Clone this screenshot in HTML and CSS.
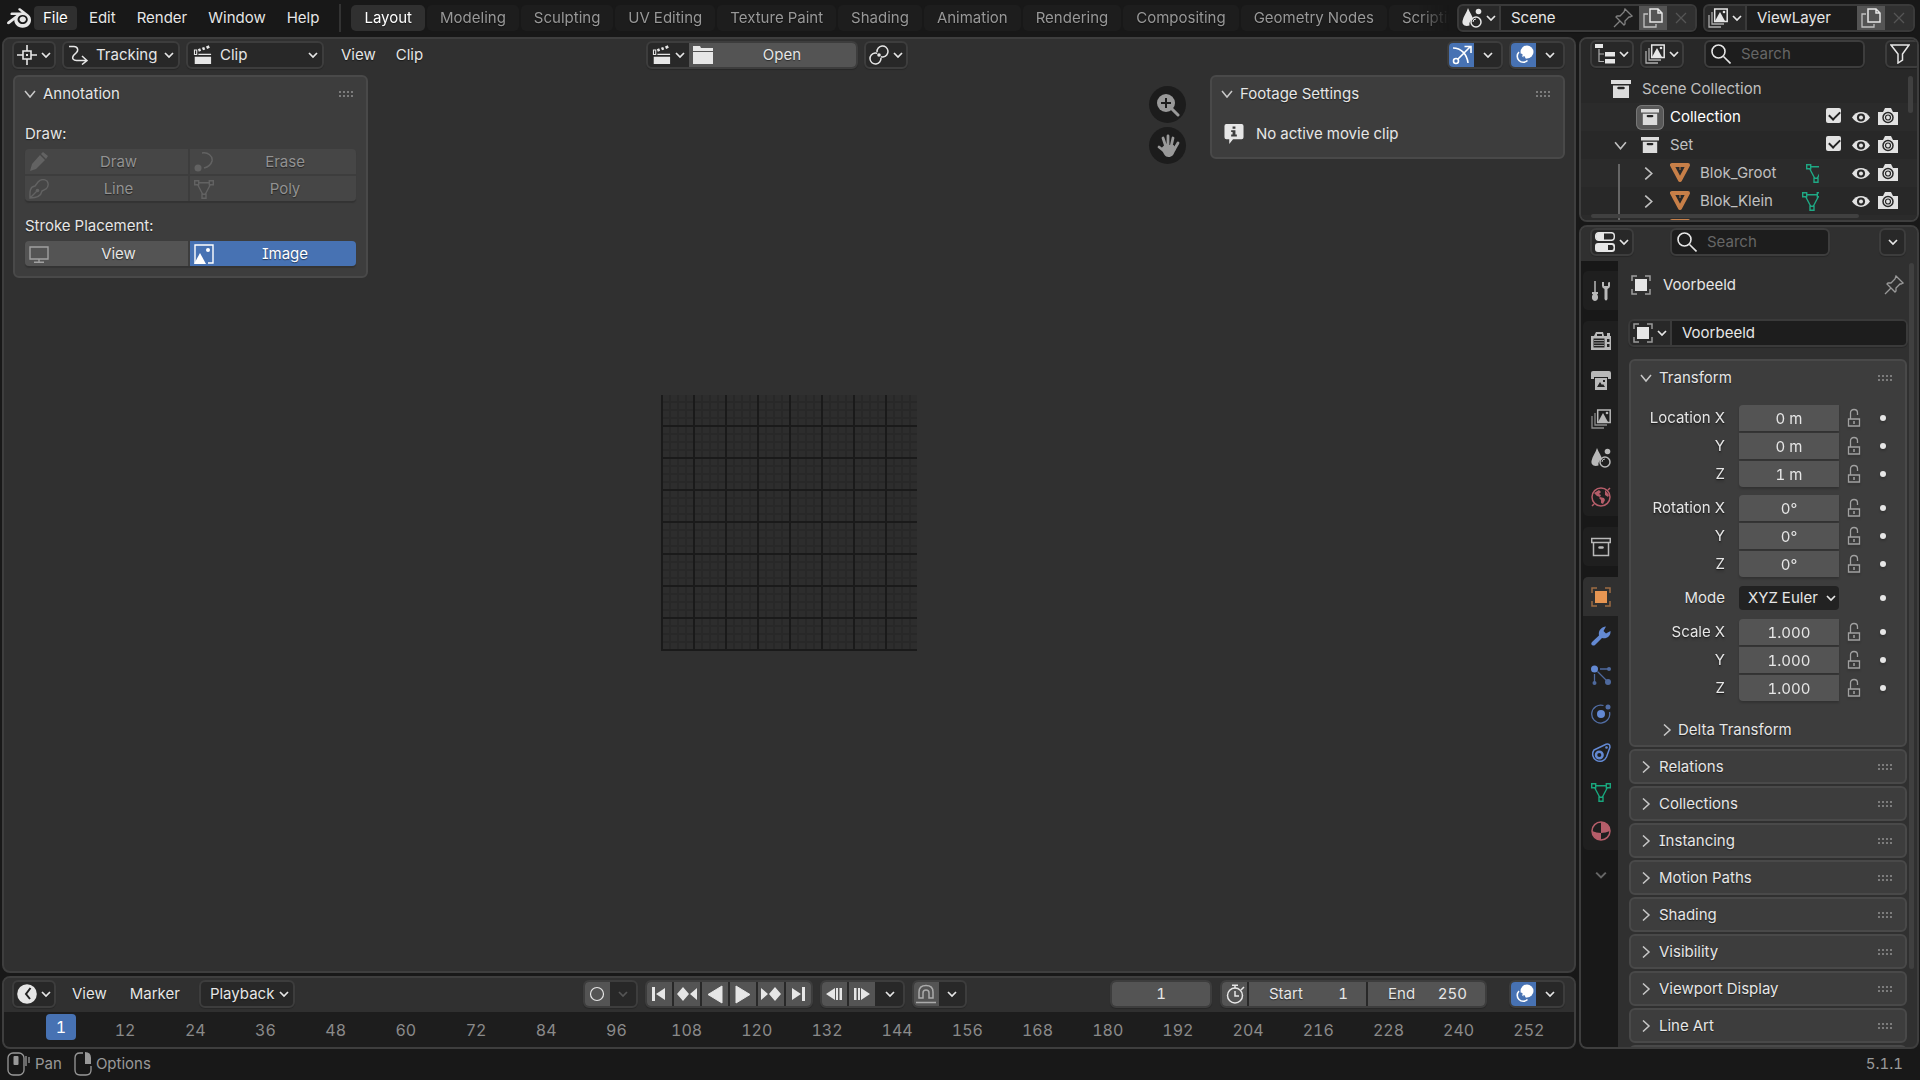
FILE: index.html
```html
<!DOCTYPE html>
<html lang="en">
<head>
<meta charset="utf-8">
<title>Blender</title>
<link rel="stylesheet" href="styles.css">
</head>
<body>
<svg class="defs" aria-hidden="true">
  <symbol id="blender" viewBox="0 0 24 24"><path fill="currentColor" d="M12.51 13.214c.046-.8.438-1.506 1.03-2.006a3.424 3.424 0 0 1 2.212-.79c.85 0 1.631.3 2.211.79.592.5.983 1.206 1.028 2.005.045.823-.285 1.586-.865 2.153a3.389 3.389 0 0 1-2.374.938 3.393 3.393 0 0 1-2.376-.938c-.58-.567-.91-1.33-.865-2.152M7.35 14.831c.006.314.106.922.256 1.398a7.372 7.372 0 0 0 1.593 2.757 8.227 8.227 0 0 0 2.787 2.001 8.947 8.947 0 0 0 3.66.76 8.964 8.964 0 0 0 3.657-.772 8.285 8.285 0 0 0 2.785-2.01 7.428 7.428 0 0 0 1.592-2.762 6.964 6.964 0 0 0 .25-3.074 7.123 7.123 0 0 0-1.016-2.779 7.764 7.764 0 0 0-1.852-2.043h.002L13.566 2.55l-.02-.015c-.492-.378-1.319-.376-1.86.002-.547.382-.609 1.015-.123 1.415l-.001.001 3.126 2.543-9.53.01h-.013c-.788.001-1.545.518-1.695 1.172-.154.665.38 1.217 1.2 1.22V8.9l4.83-.01-8.62 6.617-.034.025c-.813.622-1.075 1.658-.563 2.313.52.667 1.625.668 2.447.004L7.414 14s-.069.52-.063.831zm12.09 1.741c-.97.988-2.326 1.548-3.795 1.55-1.47.004-2.827-.552-3.797-1.538a4.51 4.51 0 0 1-1.036-1.622 4.282 4.282 0 0 1 .282-3.519 4.702 4.702 0 0 1 1.153-1.371c.942-.768 2.141-1.183 3.396-1.185 1.256-.002 2.455.41 3.398 1.175.48.391.87.854 1.152 1.367a4.28 4.28 0 0 1 .522 1.706 4.236 4.236 0 0 1-.239 1.811 4.54 4.54 0 0 1-1.035 1.626"/></symbol>
  <symbol id="down" viewBox="0 0 10 10"><path d="M1 3l4 4 4-4" fill="none" stroke="currentColor" stroke-width="1.7"/></symbol>
  <symbol id="open" viewBox="0 0 12 12"><path d="M1 3l5 6 5-6" fill="none" stroke="currentColor" stroke-width="1.5"/></symbol>
  <symbol id="closed" viewBox="0 0 12 12"><path d="M3 0.500l6 5.500-6 5.500" fill="none" stroke="currentColor" stroke-width="1.5"/></symbol>
  <symbol id="grip" viewBox="0 0 16 8"><path d="M1 1h2v2H1zM5 1h2v2H5zM9 1h2v2H9zM13 1h2v2h-2zM1 5h2v2H1zM5 5h2v2H5zM9 5h2v2H9zM13 5h2v2h-2z" fill="#7c7c7c"/></symbol>
  <symbol id="tracker" viewBox="0 0 20 20"><path d="M10 0v6M10 14v6M0 10h6M14 10h6M6 6h8v8H6z" fill="none" stroke="currentColor" stroke-width="1.6"/><path d="M9 9h2v2H9z" fill="currentColor"/></symbol>
  <symbol id="path" viewBox="0 0 20 20"><path d="M1 1.500h5c4 0 4.500 4 2.500 6l-3 3c-2 3 0 5 3 5h10M14 11l5 4.500-5 4" fill="none" stroke="currentColor" stroke-width="1.500"/></symbol>
  <symbol id="clap" viewBox="0 0 20 22"><path d="M2 13h18v8H2z" fill="currentColor"/><path d="M1.700 5.500h2.500v5H1.700z" fill="none" stroke="currentColor" stroke-width="1.200"/><path d="M6 10.300h14" stroke="currentColor" stroke-width="1.300"/><path d="M6 6l2.500-1M10.500 4.500l2.500-1M15 3l3-1.300" stroke="currentColor" stroke-width="3"/></symbol>
  <symbol id="folder" viewBox="0 0 20 20"><path d="M0 1h7l1 2h12v3H0zM0 7h20v12H0z" fill="currentColor"/></symbol>
  <symbol id="link" viewBox="0 0 20 20"><g fill="none" stroke="currentColor" stroke-width="1.500"><circle cx="6.500" cy="13.500" r="5.500" stroke-dasharray="27.500 7" transform="rotate(-5 6.500 13.500)"/><circle cx="13.500" cy="6.500" r="5.500" stroke-dasharray="27.500 7" transform="rotate(175 13.500 6.500)"/></g><circle cx="10" cy="10" r="1.800" fill="currentColor"/></symbol>
  <symbol id="gizmo" viewBox="0 0 20 20"><g fill="none" stroke="currentColor" stroke-width="1.600"><path d="M1 3c8 0 14 6 15 15M6 14L18 2M12.500 1.500H19V8"/><circle cx="4" cy="16" r="2.500"/></g></symbol>
  <symbol id="overlay" viewBox="0 0 20 20"><circle cx="13" cy="7" r="6.500" fill="currentColor"/><path d="M5 7a6 6 0 1 0 8.500 8.500M10 10l3 3" fill="none" stroke="currentColor" stroke-width="1.600"/><path d="M7 9l4 4" stroke="#4772b3" stroke-width="1.500" stroke-dasharray="2 1.500"/></symbol>
  <symbol id="pencil" viewBox="0 0 20 20"><path d="M1 19l2-7 8-9 5 5-9 9zM12 2l2-2 5 4-2 3z" fill="currentColor"/></symbol>
  <symbol id="erase" viewBox="0 0 20 20"><circle cx="4" cy="16" r="3.500" fill="currentColor"/><path d="M8 1c6-1 11 3 10 8-1 4-4 6-8 7" fill="none" stroke="currentColor" stroke-width="1.500"/></symbol>
  <symbol id="pen" viewBox="0 0 20 20"><path d="M1 19c0-5-1-11 5-12l3-4c3-3 6-3 9-1 2 3 1 6-1 8l-4 2c-1 5-6 7-12 7zM1 19l7-7" fill="none" stroke="currentColor" stroke-width="1.400"/><circle cx="8.500" cy="11.500" r="1.800" fill="currentColor"/></symbol>
  <symbol id="mesh" viewBox="0 0 20 20"><path d="M.7 1.700h4v4h-4zM15.300 1.700h4v4h-4zM8 15.300h4v4H8zM4.700 3.700h10.600M3.700 5.700l5 9.600M16.300 5.700l-5 9.600" fill="none" stroke="currentColor" stroke-width="1.400"/></symbol>
  <symbol id="screen" viewBox="0 0 20 20"><path d="M1 3h18v12H1zM10 15v3M5 18.300h10" fill="none" stroke="currentColor" stroke-width="1.400"/></symbol>
  <symbol id="image" viewBox="0 0 20 20"><path d="M4 19H1V1h18v18h-5" fill="none" stroke="currentColor" stroke-width="1.400"/><path d="M0 20l6-11 6 11z" fill="currentColor"/><circle cx="14" cy="6" r="2" fill="currentColor"/></symbol>
  <symbol id="magnify" viewBox="0 0 24 24"><circle cx="10" cy="10" r="9" fill="#999"/><path d="M15 15l7 7" stroke="#999" stroke-width="3" stroke-linecap="round"/><path d="M10 5v10M5 10h10" stroke="#1c1c1c" stroke-width="2"/></symbol>
  <symbol id="hand" viewBox="0 0 24 24"><path d="M3 13l5 4M7 4l3 9M12 2v10M17 4l-2 9M22 9l-4 7" stroke="#999" stroke-width="2.800" stroke-linecap="round"/><path d="M5.500 14l3-3h9l2.500 3c-2 7-4 9-7.500 9-3.500 0-5-3-7-9z" fill="#999"/></symbol>
  <symbol id="info" viewBox="0 0 20 21"><path d="M2 0h16q2 0 2 2v12q0 2-2 2H9l-4 5v-5H2q-2 0-2-2V2q0-2 2-2z" fill="currentColor"/><path d="M8.500 2.500h3v2.500h-3zM7 6.500h4.500V11H13v2H7v-2h1.500V8.500H7z" fill="#3d3d3d"/></symbol>
  <symbol id="scene" viewBox="0 0 20 20"><path d="M6 0c2 5 4.500 8 5 11-3 1-4 4-3.500 6.500C2 19 0 16 .5 13 1.500 8 4.500 5 6 0z" fill="currentColor"/><circle cx="16.500" cy="3.500" r="2.800" fill="currentColor"/><circle cx="14" cy="14" r="5" fill="none" stroke="currentColor" stroke-width="1.500"/><path d="M11 14a3 3 0 0 1 3-3" fill="none" stroke="currentColor"/></symbol>
  <symbol id="pin" viewBox="0 0 20 20"><path d="M12 1l7 7-2 1-1 0-4 4v3l-1 1-8-8 1-1h3l4-4zM7 13l-6 6" fill="none" stroke="currentColor" stroke-width="1.300"/></symbol>
  <symbol id="copy" viewBox="0 0 20 20"><path d="M7 1h8l4 4v9H7zM15 1v4h4" fill="none" stroke="currentColor" stroke-width="1.500"/><path d="M5 6H1v13h12v-3" fill="none" stroke="currentColor" stroke-width="1.300" opacity=".75"/></symbol>
  <symbol id="cross" viewBox="0 0 12 12"><path d="M1 1l10 10M11 1L1 11" stroke="currentColor" stroke-width="1.300"/></symbol>
  <symbol id="layers" viewBox="0 0 20 20"><path d="M6.700 1h12.500v12.500H6.700z" fill="none" stroke="currentColor" stroke-width="1.500"/><path d="M7 13l5-9 5 9z" fill="currentColor"/><circle cx="16" cy="4" r="1.300" fill="currentColor"/><path d="M4 4v12h12M1 7v12h12" fill="none" stroke="currentColor" stroke-width="1.300" opacity=".7"/></symbol>
  <symbol id="tree" viewBox="0 0 20 20"><path d="M0 0h8v4H0zM10 8h10v4.500H10zM10 15h10v4.500H10z" fill="currentColor"/><path d="M4 5v12.500h5M4 10h5" fill="none" stroke="currentColor" stroke-width="1.200" opacity=".7"/></symbol>
  <symbol id="search" viewBox="0 0 20 20"><circle cx="7.500" cy="7.500" r="6.500" fill="none" stroke="currentColor" stroke-width="1.600"/><path d="M12.500 12.500l7 7" stroke="currentColor" stroke-width="1.600"/></symbol>
  <symbol id="funnel" viewBox="0 0 20 20"><path d="M1 1h18l-6.500 9v6L8 19v-9z" fill="none" stroke="currentColor" stroke-width="1.500"/></symbol>
  <symbol id="box" viewBox="0 0 20 20"><path d="M0 1h20v4H0zM2 6.500h16V19H2z" fill="currentColor"/><path d="M7.500 9h5" stroke="#222" stroke-width="2.500" stroke-linecap="round"/></symbol>
  <symbol id="boxline" viewBox="0 0 20 20"><path d="M.7 1.500h18.600v4H.7zM2.500 5.500v13h15v-13" fill="none" stroke="currentColor" stroke-width="1.500"/><path d="M8.500 10.500h3" stroke="currentColor" stroke-width="2.500" stroke-linecap="round"/></symbol>
  <symbol id="eye" viewBox="0 0 20 14"><path d="M0 7c5-8 15-8 20 0-5 8-15 8-20 0z" fill="currentColor"/><circle cx="10" cy="7" r="4.500" fill="#282828"/><circle cx="10" cy="7" r="2.200" fill="currentColor"/></symbol>
  <symbol id="camera" viewBox="0 0 20 18"><path d="M0 4h5l2-4h6l2 4h5v13H0z" fill="currentColor"/><circle cx="10" cy="9.500" r="5" fill="none" stroke="#282828" stroke-width="1.500"/><circle cx="10" cy="9.500" r="2.500" fill="none" stroke="#282828" stroke-width="1.200"/></symbol>
  <symbol id="tri" viewBox="0 0 20 20"><path d="M2 2h16l-8 15z" fill="none" stroke="#c77f48" stroke-width="4" stroke-linejoin="round"/><path d="M10 2v5" stroke="#c77f48"/></symbol>
  <symbol id="toggles" viewBox="0 0 20 20"><rect x=".7" y=".7" width="18.600" height="7.600" rx="3" fill="none" stroke="currentColor" stroke-width="1.400"/><path d="M3 1h6v7H3Q1 8 1 4.500T3 1z" fill="currentColor"/><rect y="11" width="20" height="9" rx="3" fill="currentColor"/><path d="M13 13h4q1.500 0 1.500 2.500T17 18h-4z" fill="#282828"/></symbol>
  <symbol id="tools" viewBox="0 0 20 20"><path d="M4 0v11" stroke="currentColor" stroke-width="1.500"/><path d="M1 11h6v2H6c2 3 1 7-2 7s-4-4-2-7H1z" fill="currentColor"/><path d="M11 1v4q0 2 2.500 3v10q1.500 3 3 0V8Q19 7 19 5V1l-2 .5V5h-4V1z" fill="currentColor"/></symbol>
  <symbol id="render" viewBox="0 0 20 20"><path d="M0 5h3l2-4h7l1 4h3V2h3v3h1v14H0z" fill="currentColor"/><path d="M6 3h5v2H6zM2.500 7.500h11v9h-11zM16 8h2.500v3H16zM16 13h2.500v3H16z" fill="#222"/><path d="M3 9.500h10M3 12h10M3 14.500h10" stroke="currentColor" stroke-width=".8"/></symbol>
  <symbol id="print" viewBox="0 0 20 20"><path d="M2 1h16q2 0 2 2v6h-3V7H3v2H0V3q0-2 2-2zM4 8h12v12H4z" fill="currentColor"/><path d="M6 17l3-5 2 3 1-1 2 3zM12 10h2v2h-2z" fill="#222"/></symbol>
  <symbol id="world" viewBox="0 0 20 20"><circle cx="10" cy="10" r="9" fill="none" stroke="currentColor" stroke-width="1.500"/><path d="M3 6l5-3 2 2-2 2 2 1-1 2-3-1zM9 10l4 1 1 2-2 4-2-1v-3l-2-2zM14 3l4 5-1 2-3-2z" fill="currentColor"/><path d="M17 3l2-2M3 17l-2 2" stroke="currentColor" stroke-width="1.500"/></symbol>
  <symbol id="object" viewBox="0 0 20 20"><path d="M4 4h12v12H4z" fill="currentColor"/><path d="M1 6V1h5M14 1h5v5M19 14v5h-5M6 19H1v-5" fill="none" stroke="currentColor" stroke-width="1.500" opacity=".6"/></symbol>
  <symbol id="wrench" viewBox="0 0 20 20"><path d="M1 16L8 9.500C7 5 10 1 15 .5L12.500 5l2.500 2.500L19.500 5c.5 5-4 8.500-8.500 7L4 19q-1.500 1-3 0t0-3z" fill="currentColor"/></symbol>
  <symbol id="particles" viewBox="0 0 20 20"><circle cx="3.500" cy="4" r="3.500" fill="currentColor"/><g opacity=".7" fill="currentColor"><circle cx="18" cy="4" r="2"/><circle cx="3.500" cy="18" r="2"/><circle cx="17" cy="17" r="3"/><path d="M9 4h8M3.500 9v8M6.500 6.500L16 16" stroke="currentColor" stroke-width="1.300"/></g></symbol>
  <symbol id="physics" viewBox="0 0 20 20"><circle cx="10" cy="10" r="4" fill="currentColor"/><g opacity=".75"><circle cx="17" cy="3" r="2.500" fill="currentColor"/><path d="M12.500 1.500A9 9 0 1 0 18.500 8" fill="none" stroke="currentColor" stroke-width="1.300"/></g></symbol>
  <symbol id="constraint" viewBox="0 0 20 20"><path d="M3 7L15 1.200q4-1 4 3L15.500 14A7.200 7.200 0 1 1 3 7z" fill="none" stroke="currentColor" stroke-width="1.500"/><circle cx="8.300" cy="12" r="3.300" fill="none" stroke="currentColor" stroke-width="2.500"/><circle cx="15.500" cy="4.500" r="1.300" fill="currentColor"/></symbol>
  <symbol id="material" viewBox="0 0 20 20"><circle cx="10" cy="10" r="9" fill="none" stroke="currentColor" stroke-width="1.500"/><path d="M10 1a9 9 0 0 1 9 9q-4.500 2-9 2zM1 10q4.500 2 9 2v7a9 9 0 0 1-9-9z" fill="currentColor"/></symbol>
  <symbol id="lock" viewBox="0 0 14 20"><path d="M1.500 11h11v7h-11zM3.500 11V5q0-3.500 3.500-3.500T10.500 5v2" fill="none" stroke="currentColor" stroke-width="1.300"/><path d="M7 13v3" stroke="currentColor" stroke-width="1.500"/></symbol>
  <symbol id="clock" viewBox="0 0 20 20"><circle cx="10" cy="10" r="9.800" fill="currentColor"/><path d="M13.500 4L9 10l4 5" fill="none" stroke="#222" stroke-width="2"/></symbol>
  <symbol id="ring" viewBox="0 0 20 20"><circle cx="10" cy="10" r="6.500" fill="none" stroke="currentColor" stroke-width="1.200"/></symbol>
  <symbol id="tostart" viewBox="0 0 20 20"><path d="M3 3h3v14H3zM16 4v12l-9-6z" fill="currentColor"/></symbol>
  <symbol id="prevkey" viewBox="0 0 20 20"><path d="M6 3l6 7-6 7-6-7zM20 4v12l-7-6z" fill="currentColor"/></symbol>
  <symbol id="back" viewBox="0 0 20 20"><path d="M17 2v17L3 10.500z" fill="currentColor" stroke="currentColor" stroke-linejoin="round"/></symbol>
  <symbol id="step" viewBox="0 0 20 20"><path d="M11 4v12l-9-6zM12 4h2v12h-2zM15.500 4h2.500v12h-2.500z" fill="currentColor"/></symbol>
  <symbol id="magnet" viewBox="0 0 20 20"><path d="M3 14V8q0-6.500 7-6.500T17 8v6h-4V9q0-3-3-3T7 9v5zM0 18.500h20" fill="none" stroke="currentColor" stroke-width="1.500"/></symbol>
  <symbol id="timer" viewBox="0 0 20 20"><circle cx="10" cy="11.500" r="7.500" fill="none" stroke="currentColor" stroke-width="1.500"/><path d="M10 7v5h4M7 1.200h6M10 1v3M16 6l3-3" fill="none" stroke="currentColor" stroke-width="1.500"/></symbol>
  <symbol id="mouse" viewBox="0 0 24 24"><rect x="1" y="1" width="16" height="22" rx="5" fill="none" stroke="currentColor" stroke-width="1.300"/><rect x="6.500" y="4" width="5" height="9" rx="1" fill="currentColor"/><path d="M19 4v10M22 5v6" stroke="currentColor" stroke-width="1.300"/></symbol>
  <symbol id="mouser" viewBox="0 0 18 24"><path d="M9 1H6Q1 1 1 6v12q0 5 5 5h6q5 0 5-5v-4" fill="none" stroke="currentColor" stroke-width="1.300"/><path d="M11 0q6 0 6 6v6h-6z" fill="currentColor"/></symbol>
</svg>

<header class="topbar">
  <nav class="menus">
    <button class="logo" aria-label="Blender"><svg><use href="#blender"/></svg></button>
    <button class="menu hot">File</button><button class="menu">Edit</button><button class="menu">Render</button><button class="menu">Window</button><button class="menu">Help</button>
  </nav>
  <nav class="tabs">
    <button class="tab on">Layout</button><button class="tab">Modeling</button><button class="tab">Sculpting</button><button class="tab">UV Editing</button><button class="tab">Texture Paint</button><button class="tab">Shading</button><button class="tab">Animation</button><button class="tab">Rendering</button><button class="tab">Compositing</button><button class="tab">Geometry Nodes</button><button class="tab">Scripting</button>
  </nav>
  <div class="group idblock scene">
    <button class="drop" aria-label="Browse scene"><svg class="i"><use href="#scene"/></svg><svg class="c"><use href="#down"/></svg></button>
    <input class="name" aria-label="Scene name" value="Scene">
    <button class="flat dim" aria-label="Pin scene"><svg class="i"><use href="#pin"/></svg></button>
    <button class="solid" aria-label="New scene"><svg class="i"><use href="#copy"/></svg></button>
    <button class="gone" aria-label="Remove scene" disabled><svg class="x"><use href="#cross"/></svg></button>
  </div>
  <div class="group idblock layer">
    <button class="drop" aria-label="Browse view layer"><svg class="i"><use href="#layers"/></svg><svg class="c"><use href="#down"/></svg></button>
    <input class="name" aria-label="View layer name" value="ViewLayer">
    <button class="solid" aria-label="New view layer"><svg class="i"><use href="#copy"/></svg></button>
    <button class="gone" aria-label="Remove view layer" disabled><svg class="x"><use href="#cross"/></svg></button>
  </div>
</header>

<main class="workspace">
  <div class="column wide">
    <section class="area clip">
      <div class="bar">
        <div class="side">
          <div class="group"><button class="drop" aria-label="Editor type"><svg class="i"><use href="#tracker"/></svg><svg class="c"><use href="#down"/></svg></button></div>
          <div class="group pick tracking"><svg class="i"><use href="#path"/></svg><select aria-label="View mode"><option>Tracking</option><option>Mask</option></select><svg class="c"><use href="#down"/></svg></div>
          <div class="group pick mode"><svg class="i"><use href="#clap"/></svg><select aria-label="Clip view"><option>Clip</option><option>Graph</option><option>Dopesheet</option></select><svg class="c"><use href="#down"/></svg></div>
          <button class="menu">View</button><button class="menu">Clip</button>
        </div>
        <div class="middle">
          <div class="group opener"><button class="drop" aria-label="Browse clips"><svg class="i"><use href="#clap"/></svg><svg class="c"><use href="#down"/></svg></button><button class="solid open"><svg class="i"><use href="#folder"/></svg><span>Open</span></button></div>
          <div class="group"><button class="drop" aria-label="Pivot point"><svg class="i"><use href="#link"/></svg><svg class="c"><use href="#down"/></svg></button></div>
        </div>
        <div class="side end">
          <div class="group"><button class="blue" aria-label="Show gizmo"><svg class="i"><use href="#gizmo"/></svg></button><button class="more" aria-label="Gizmo options"><svg class="c"><use href="#down"/></svg></button></div>
          <div class="group"><button class="blue" aria-label="Show overlays"><svg class="i"><use href="#overlay"/></svg></button><button class="more" aria-label="Overlay options"><svg class="c"><use href="#down"/></svg></button></div>
        </div>
      </div>
      <div class="stage">
        <div class="mesh-grid"></div>
        <div class="panel annotation">
          <button class="title"><svg class="t"><use href="#open"/></svg><span>Annotation</span><svg class="g"><use href="#grip"/></svg></button>
          <div class="body">
            <p class="label">Draw:</p>
            <div class="choices">
              <button disabled><svg class="i"><use href="#pencil"/></svg><span>Draw</span></button>
              <button disabled><svg class="i"><use href="#erase"/></svg><span>Erase</span></button>
              <button disabled><svg class="i"><use href="#pen"/></svg><span>Line</span></button>
              <button disabled><svg class="i"><use href="#mesh"/></svg><span>Poly</span></button>
            </div>
            <p class="label">Stroke Placement:</p>
            <div class="choices">
              <button><svg class="i"><use href="#screen"/></svg><span>View</span></button>
              <button class="chosen"><svg class="i"><use href="#image"/></svg><span>Image</span></button>
            </div>
          </div>
        </div>
        <div class="navigate">
          <button aria-label="Zoom"><svg><use href="#magnify"/></svg></button>
          <button aria-label="Pan"><svg><use href="#hand"/></svg></button>
        </div>
        <div class="panel footage">
          <button class="title"><svg class="t"><use href="#open"/></svg><span>Footage Settings</span><svg class="g"><use href="#grip"/></svg></button>
          <p class="notice"><svg class="i"><use href="#info"/></svg>No active movie clip</p>
        </div>
      </div>
    </section>

    <section class="area timeline">
      <div class="bar">
        <div class="side">
          <div class="group"><button class="drop" aria-label="Editor type"><svg class="i"><use href="#clock"/></svg><svg class="c"><use href="#down"/></svg></button></div>
          <button class="menu">View</button><button class="menu">Marker</button>
          <div class="group"><button class="playback">Playback<svg class="c"><use href="#down"/></svg></button></div>
        </div>
        <div class="middle">
          <div class="group"><button class="solid" aria-label="Auto keying"><svg class="i"><use href="#ring"/></svg></button><button class="more faint" aria-label="Auto keying options" disabled><svg class="c"><use href="#down"/></svg></button></div>
          <div class="group transport">
            <button class="solid" aria-label="Jump to start"><svg class="i"><use href="#tostart"/></svg></button>
            <button class="solid" aria-label="Previous keyframe"><svg class="i"><use href="#prevkey"/></svg></button>
            <button class="solid" aria-label="Play backwards"><svg class="i"><use href="#back"/></svg></button>
            <button class="solid" aria-label="Play"><svg class="i flip"><use href="#back"/></svg></button>
            <button class="solid" aria-label="Next keyframe"><svg class="i flip"><use href="#prevkey"/></svg></button>
            <button class="solid" aria-label="Jump to end"><svg class="i flip"><use href="#tostart"/></svg></button>
          </div>
          <div class="group transport">
            <button class="solid" aria-label="Step back"><svg class="i"><use href="#step"/></svg></button>
            <button class="solid" aria-label="Step forward"><svg class="i flip"><use href="#step"/></svg></button>
            <button class="more" aria-label="Step options"><svg class="c"><use href="#down"/></svg></button>
          </div>
          <div class="group"><button class="solid" aria-label="Snap"><svg class="i soft"><use href="#magnet"/></svg></button><button class="more" aria-label="Snap options"><svg class="c"><use href="#down"/></svg></button></div>
        </div>
        <div class="side end">
          <div class="group"><input class="frame" aria-label="Current frame" value="1"></div>
          <div class="group range">
            <button class="solid" aria-label="Preview range"><svg class="i"><use href="#timer"/></svg></button>
            <label>Start<input value="1"></label>
            <label>End<input value="250"></label>
          </div>
          <div class="group last"><button class="blue" aria-label="Show overlays"><svg class="i"><use href="#overlay"/></svg></button><button class="more" aria-label="Overlay options"><svg class="c"><use href="#down"/></svg></button></div>
        </div>
      </div>
      <div class="ruler">
        <span class="playhead">1</span>
        <div class="ticks"><span>12</span><span>24</span><span>36</span><span>48</span><span>60</span><span>72</span><span>84</span><span>96</span><span>108</span><span>120</span><span>132</span><span>144</span><span>156</span><span>168</span><span>180</span><span>192</span><span>204</span><span>216</span><span>228</span><span>240</span><span>252</span></div>
      </div>
    </section>
  </div>

  <div class="column narrow">
    <section class="area outliner">
      <div class="bar">
        <div class="group"><button class="drop" aria-label="Editor type"><svg class="i"><use href="#tree"/></svg><svg class="c"><use href="#down"/></svg></button></div>
        <div class="group"><button class="drop" aria-label="Display mode"><svg class="i"><use href="#layers"/></svg><svg class="c"><use href="#down"/></svg></button></div>
        <label class="group find"><svg class="i"><use href="#search"/></svg><input type="search" placeholder="Search" aria-label="Search outliner"></label>
        <div class="group cut"><button class="filter" aria-label="Filter"><svg class="i"><use href="#funnel"/></svg></button></div>
      </div>
      <div class="tree">
        <div class="row root"><svg class="i"><use href="#box"/></svg><span>Scene Collection</span></div>
        <div class="row one alt active"><i class="fold"></i><span class="halo"><svg class="i"><use href="#box"/></svg></span><span>Collection</span><input type="checkbox" checked aria-label="Enable Collection"><button aria-label="Hide"><svg class="eye"><use href="#eye"/></svg></button><button aria-label="Disable in renders"><svg class="cam"><use href="#camera"/></svg></button></div>
        <div class="row one"><svg class="fold"><use href="#open"/></svg><span class="halo"><svg class="i"><use href="#box"/></svg></span><span>Set</span><input type="checkbox" checked aria-label="Enable Set"><button aria-label="Hide"><svg class="eye"><use href="#eye"/></svg></button><button aria-label="Disable in renders"><svg class="cam"><use href="#camera"/></svg></button></div>
        <div class="row two alt"><svg class="fold"><use href="#closed"/></svg><svg class="i"><use href="#tri"/></svg><span>Blok_Groot</span><span class="data short"><svg class="i"><use href="#mesh"/></svg></span><button aria-label="Hide"><svg class="eye"><use href="#eye"/></svg></button><button aria-label="Disable in renders"><svg class="cam"><use href="#camera"/></svg></button></div>
        <div class="row two"><svg class="fold"><use href="#closed"/></svg><svg class="i"><use href="#tri"/></svg><span>Blok_Klein</span><span class="data"><svg class="i"><use href="#mesh"/></svg></span><button aria-label="Hide"><svg class="eye"><use href="#eye"/></svg></button><button aria-label="Disable in renders"><svg class="cam"><use href="#camera"/></svg></button></div>
        <div class="row two alt"><i class="fold"></i><svg class="i"><use href="#tri"/></svg><button class="push" aria-label="Hide"><svg class="eye"><use href="#eye"/></svg></button><button aria-label="Disable in renders"><svg class="cam"><use href="#camera"/></svg></button></div>
        <div class="branch"></div><div class="vscroll"></div><div class="hscroll"></div>
      </div>
    </section>

    <section class="area properties">
      <div class="bar">
        <div class="group"><button class="drop" aria-label="Editor type"><svg class="i"><use href="#toggles"/></svg><svg class="c"><use href="#down"/></svg></button></div>
        <label class="group find"><svg class="i"><use href="#search"/></svg><input type="search" placeholder="Search" aria-label="Search properties"></label>
        <div class="group"><button class="only" aria-label="Options"><svg class="c"><use href="#down"/></svg></button></div>
      </div>
      <div class="split">
        <nav class="proptabs">
          <div class="set"><button aria-label="Tool"><svg class="i"><use href="#tools"/></svg></button></div>
          <div class="set"><button aria-label="Render"><svg class="i"><use href="#render"/></svg></button><button aria-label="Output"><svg class="i"><use href="#print"/></svg></button><button aria-label="View Layer"><svg class="i"><use href="#layers"/></svg></button><button aria-label="Scene"><svg class="i"><use href="#scene"/></svg></button><button class="red" aria-label="World"><svg class="i"><use href="#world"/></svg></button></div>
          <div class="set"><button aria-label="Collection"><svg class="i"><use href="#boxline"/></svg></button></div>
          <div class="set"><button class="orange" aria-label="Object"><svg class="i"><use href="#object"/></svg></button><button class="azure" aria-label="Modifiers"><svg class="i"><use href="#wrench"/></svg></button><button class="azure" aria-label="Particles"><svg class="i"><use href="#particles"/></svg></button><button class="azure" aria-label="Physics"><svg class="i"><use href="#physics"/></svg></button><button class="azure" aria-label="Constraints"><svg class="i"><use href="#constraint"/></svg></button><button class="green" aria-label="Data"><svg class="i"><use href="#mesh"/></svg></button><button class="red" aria-label="Material"><svg class="i"><use href="#material"/></svg></button></div>
          <svg class="t overflow"><use href="#down"/></svg>
        </nav>
        <div class="props">
          <div class="crumb"><svg class="i"><use href="#object"/></svg><span>Voorbeeld</span><button aria-label="Pin"><svg class="i"><use href="#pin"/></svg></button></div>
          <div class="group idblock object"><button class="drop" aria-label="Browse objects"><svg class="i"><use href="#object"/></svg><svg class="c"><use href="#down"/></svg></button><input class="name" aria-label="Object name" value="Voorbeeld"></div>
          <div class="panel transform">
            <button class="title"><svg class="t"><use href="#open"/></svg><span>Transform</span><svg class="g"><use href="#grip"/></svg></button>
            <div class="fields">
              <div class="triple">
                <div class="prop"><label for="lx">Location X</label><input id="lx" value="0 m"><button aria-label="Lock"><svg><use href="#lock"/></svg></button><i></i></div>
                <div class="prop"><label for="ly">Y</label><input id="ly" value="0 m"><button aria-label="Lock"><svg><use href="#lock"/></svg></button><i></i></div>
                <div class="prop"><label for="lz">Z</label><input id="lz" value="1 m"><button aria-label="Lock"><svg><use href="#lock"/></svg></button><i></i></div>
              </div>
              <div class="triple">
                <div class="prop"><label for="rx">Rotation X</label><input id="rx" value="0°"><button aria-label="Lock"><svg><use href="#lock"/></svg></button><i></i></div>
                <div class="prop"><label for="ry">Y</label><input id="ry" value="0°"><button aria-label="Lock"><svg><use href="#lock"/></svg></button><i></i></div>
                <div class="prop"><label for="rz">Z</label><input id="rz" value="0°"><button aria-label="Lock"><svg><use href="#lock"/></svg></button><i></i></div>
              </div>
              <div class="prop"><label for="mode">Mode</label><div class="euler"><select id="mode"><option>XYZ Euler</option><option>Quaternion (WXYZ)</option></select><svg class="c"><use href="#down"/></svg></div><b></b><i></i></div>
              <div class="triple">
                <div class="prop"><label for="sx">Scale X</label><input id="sx" value="1.000"><button aria-label="Lock"><svg><use href="#lock"/></svg></button><i></i></div>
                <div class="prop"><label for="sy">Y</label><input id="sy" value="1.000"><button aria-label="Lock"><svg><use href="#lock"/></svg></button><i></i></div>
                <div class="prop"><label for="sz">Z</label><input id="sz" value="1.000"><button aria-label="Lock"><svg><use href="#lock"/></svg></button><i></i></div>
              </div>
            </div>
            <button class="title sub"><svg class="t"><use href="#closed"/></svg><span>Delta Transform</span></button>
          </div>
          <div class="panel"><button class="title"><svg class="t"><use href="#closed"/></svg><span>Relations</span><svg class="g"><use href="#grip"/></svg></button></div>
          <div class="panel"><button class="title"><svg class="t"><use href="#closed"/></svg><span>Collections</span><svg class="g"><use href="#grip"/></svg></button></div>
          <div class="panel"><button class="title"><svg class="t"><use href="#closed"/></svg><span>Instancing</span><svg class="g"><use href="#grip"/></svg></button></div>
          <div class="panel"><button class="title"><svg class="t"><use href="#closed"/></svg><span>Motion Paths</span><svg class="g"><use href="#grip"/></svg></button></div>
          <div class="panel"><button class="title"><svg class="t"><use href="#closed"/></svg><span>Shading</span><svg class="g"><use href="#grip"/></svg></button></div>
          <div class="panel"><button class="title"><svg class="t"><use href="#closed"/></svg><span>Visibility</span><svg class="g"><use href="#grip"/></svg></button></div>
          <div class="panel"><button class="title"><svg class="t"><use href="#closed"/></svg><span>Viewport Display</span><svg class="g"><use href="#grip"/></svg></button></div>
          <div class="panel"><button class="title"><svg class="t"><use href="#closed"/></svg><span>Line Art</span><svg class="g"><use href="#grip"/></svg></button></div>
          <div class="panel stub"></div>
        </div>
        <div class="track"></div>
      </div>
    </section>
  </div>
</main>

<footer class="status">
  <svg class="m"><use href="#mouse"/></svg><span>Pan</span>
  <svg class="m slim"><use href="#mouser"/></svg><span>Options</span>
  <span class="version">5.1.1</span>
</footer>
</body>
</html>
```

FILE: styles.css
```css
* { box-sizing: border-box; }

body {
  margin: 0;
  height: 100vh;
  display: flex;
  flex-direction: column;
  overflow: hidden;
  background: #181818;
  color: #e6e6e6;
  font: 15px/20px Inter, "Liberation Sans", sans-serif;
  font-feature-settings: "tnum", "cv08";
}

button, input, select {
  margin: 0;
  padding: 0;
  border: 0;
  background: none;
  color: inherit;
  font: inherit;
  font-feature-settings: inherit;
  appearance: none;
  outline: 0;
  min-width: 0;
  border-radius: 0;
}
button { display: flex; align-items: center; justify-content: center; white-space: nowrap; }
button, label, .title, .label { text-shadow: 0 1px 1px rgba(0, 0, 0, .5); }
p { margin: 0; }
svg { flex: none; display: block; }
.defs { position: absolute; width: 0; height: 0; }
.i { width: 20px; height: 20px; }
.c { width: 10px; height: 10px; }
.t { width: 12px; height: 12px; color: #c8c8c8; }
.g { width: 16px; height: 8px; margin-left: auto; }
.x { width: 12px; height: 12px; }
.flip { transform: scaleX(-1); }

/* Shared header controls */
.group {
  display: flex;
  height: 28px;
  border: 2px solid #3d3d3d;
  border-radius: 6px;
  background: #282828;
  overflow: hidden;
  box-shadow: 0 1px 1px rgba(0, 0, 0, .2);
}
.drop { width: 40px; gap: 4px; }
.more { width: 27px; }
.faint { color: #555; }
.soft { color: #aaa; }
.solid { width: 24px; background: #545454; }
.blue { width: 25px; background: #4772b3; color: #fff; }
.menu { height: 24px; padding: 0 10px; border-radius: 4px; }
.menu.hot { background: #2f2f2f; color: #fff; }
.bar { display: flex; align-items: center; background: #303030; }
.find { align-items: center; gap: 10px; padding: 0 5px; background: #1d1d1d; }
.find input { width: 100%; }
.find input::placeholder { color: #666; opacity: 1; }

/* Top bar */
.topbar { display: flex; align-items: center; height: 37px; padding: 0 5px 1px 7px; flex: none; }
.menus { display: flex; gap: 3px; padding-right: 11px; border-right: 2px solid #333; height: 28px; align-items: center; }
.menus .menu { padding: 0 9px; }
.logo svg { width: 24px; height: 24px; }
.tabs {
  flex: 1;
  min-width: 0;
  display: flex;
  gap: 2px;
  padding-left: 10px;
  margin-right: 8px;
  overflow: hidden;
  -webkit-mask-image: linear-gradient(to left, transparent, #000 32px);
  mask-image: linear-gradient(to left, transparent, #000 32px);
}
.tab { flex: none; height: 26px; padding: 0 13px; border-radius: 5px; background: #1d1d1d; color: #989898; }
.tab.on { background: #303030; color: #fff; }
.idblock { border-color: #3a3a3a; }
.idblock .name { flex: 1; width: 0; padding: 0 10px; background: #1d1d1d; border-left: 2px solid #3a3a3a; }
.scene { width: 240px; margin-right: 6px; }
.layer { width: 212px; }
.topbar .solid, .topbar .gone { width: 28px; }
.flat { width: 32px; background: #1d1d1d; }
.dim { color: #808080; }
.gone { color: #555; background: #303030; }

/* Areas */
.workspace { flex: 1; min-height: 0; display: flex; gap: 3px; padding: 0 1px 0 2px; }
.column { display: flex; flex-direction: column; gap: 3px; min-height: 0; }
.wide { flex: 1; min-width: 0; }
.narrow { width: 340px; flex: none; }
.area { border: 2px solid #3e3e3e; border-radius: 8px; overflow: hidden; background: #303030; min-height: 0; }

/* Clip editor */
.clip { flex: 1; display: flex; flex-direction: column; }
.clip .bar, .timeline .bar { height: 34px; flex: none; padding: 0 9px 2px 8px; }
.side { flex: 1; display: flex; align-items: center; gap: 6px; }
.side .menu { margin: 0 -3px; }
.side .group + .menu { margin-left: 1px; }
.end { justify-content: flex-end; }
.middle { display: flex; gap: 6px; }
.pick { align-items: center; padding: 0 4px; }
.pick select { flex: 1; padding-left: 8px; }
.tracking { width: 118px; }
.mode { width: 138px; }
.opener .drop { width: 41px; }
.open { width: 167px; padding-left: 4px; }
.open span { flex: 1; margin-right: 4px; text-align: center; }
.clip .middle { margin-right: 24px; }

.stage {
  flex: 1;
  min-height: 0;
  display: grid;
  grid-template-columns: 355px 1fr 355px;
  grid-template-rows: 1fr;
  align-items: start;
  padding: 2px 9px 0;
}
.mesh-grid {
  grid-area: 1 / 1 / 2 / -1;
  place-self: center;
  width: 256px;
  height: 256px;
  background:
    repeating-linear-gradient(to right, #1a1a1a 0 2px, transparent 2px 32px),
    repeating-linear-gradient(to top, #1a1a1a 0 2px, transparent 2px 32px),
    repeating-linear-gradient(to right, #282828 0 2px, transparent 2px 8px),
    repeating-linear-gradient(to top, #282828 0 2px, transparent 2px 8px),
    #2d2d2d;
}
.panel { border: 2px solid #494949; border-radius: 6px; background: #3d3d3d; }
.title { width: 100%; height: 31px; padding: 0 12px 0 9px; gap: 7px; justify-content: flex-start; }
.annotation { grid-area: 1 / 1; height: 203px; }
.annotation .title, .footage .title { height: 34px; }
.body { padding: 13px 10px 0; }
.label { height: 20px; margin-bottom: 5px; }
.choices { display: grid; grid-template-columns: 163px 1fr; gap: 2px; margin-bottom: 15px; border-radius: 4px; overflow: hidden; box-shadow: 0 2px 1px #333; }
.choices button { height: 25px; padding-left: 4px; background: #545454; }
.choices button span { flex: 1; text-align: center; }
.choices .i { color: #a0a0a0; }
.choices button:disabled { background: #464646; color: #929292; }
.choices button:disabled .i { color: #626262; }
.choices .chosen, .choices .chosen .i { background: #4772b3; color: #fff; }
.navigate { grid-area: 1 / 2; justify-self: end; display: grid; gap: 4px; padding: 11px 24px 0 0; }
.navigate button { width: 37px; height: 37px; border-radius: 50%; background: #1c1c1c; }
.navigate svg { width: 24px; height: 24px; }
.footage { grid-area: 1 / 3; height: 84px; }
.notice { display: flex; align-items: center; gap: 12px; height: 44px; padding: 1px 12px 0; }

/* Timeline */
.timeline { height: 73px; flex: none; display: flex; flex-direction: column; }
.timeline .menu { margin: 0; }
.timeline .side { gap: 1px; }
.timeline .side .menu { padding: 0 11px; }
.timeline .group + .menu { margin-left: 4px; }
.timeline .menu + .group { margin-left: 7px; }
.timeline .middle { gap: 7px; margin-right: 28px; }
.timeline .middle .more { width: 26px; }
.playback { width: 92px; justify-content: space-between; padding: 0 4px 0 9px; }
.transport { gap: 2px; }
.transport .solid { width: 26px; }
.timeline .solid:first-child, .transport .solid:last-child { width: 25px; }
.timeline .end { gap: 8px; }
.frame { width: 98px; text-align: center; background: #545454; }
.range { width: 267px; gap: 2px; }
.range label { display: flex; flex: 1; align-items: center; padding: 0 18px 0 20px; background: #545454; }
.range input { width: 100%; text-align: right; }
.timeline .last { margin-left: 14px; }
.ruler { flex: 1; display: flex; padding: 2px 10px 3px 42px; margin-bottom: 4px; background: #1d1d1d; font-size: 16px; line-height: 32px; }
.playhead { width: 30px; height: 26px; border-radius: 4px; background: #4772b3; color: #fff; text-align: center; line-height: 26px; margin-right: 14px; }
.ticks { flex: 1; display: flex; color: #8a8a8a; }
.ticks span { flex: 1; text-align: center; }

/* Outliner */
.outliner { height: 185px; flex: none; display: flex; flex-direction: column; background: #282828; }
.outliner .bar, .properties .bar { height: 34px; flex: none; padding: 0 0 4px 9px; gap: 6px; }
.outliner .bar { background: #282828; }
.outliner .find { width: 161px; margin-left: 14px; }
.cut { margin: 0 -4px 0 auto; }
.filter { width: 32px; padding-right: 6px; }
.tree { position: relative; flex: 1; min-height: 0; padding-top: 2px; overflow: hidden; color: #c0c0c0; }
.row { display: flex; align-items: center; height: 28px; padding-right: 19px; gap: 10px; }
.alt { background: #2b2b2b; }
.root { padding-left: 30px; gap: 11px; }
.one { padding-left: 33px; }
.two { padding-left: 61px; }
.two > .i { margin: 0 2px 0 7px; }
.one, .two { gap: 8px; }
.fold { width: 13px; height: 13px; }
.halo { display: grid; place-items: center; width: 28px; height: 25px; margin-left: 1px; border-radius: 6px; margin-right: -2px; }
.active .halo { background: #585858; box-shadow: inset 0 0 0 1px #777; }
.active { color: #fff; }
.halo, .root .i { color: #dcdcdc; }
.halo .i { width: 18px; height: 18px; }
.tree button { color: #e2e2e2; text-shadow: none; }
.eye { width: 18px; height: 13px; }
.cam { width: 20px; height: 18px; }
.push { margin-left: auto; }
.tree input { position: relative; width: 15px; height: 15px; margin: -4px 3px 0 auto; border-radius: 2px; background: #e2e2e2; }
.tree input::after { content: ""; position: absolute; left: 3px; top: 3px; width: 9px; height: 5px; border: solid #222; border-width: 0 0 2px 2px; transform: rotate(-45deg); }
.data { width: 17px; overflow: hidden; margin-left: auto; margin-right: 25px; color: #1fa884; }
.short { width: 13px; }
.branch { position: absolute; left: 37px; top: 91px; bottom: 0; width: 2px; background: #666; }
.vscroll { position: absolute; right: 4px; top: 3px; width: 5px; height: 37px; border-radius: 3px; background: #404040; }
.hscroll { position: absolute; left: 10px; right: 58px; bottom: 2px; height: 4px; border-radius: 2px; background: #404040; }

/* Properties */
.properties { flex: 1; display: flex; flex-direction: column; }
.properties .find { width: 160px; margin-left: 30px; }
.properties .bar .group:last-child { margin-left: auto; margin-right: 11px; }
.only { width: 23px; }
.split { flex: 1; min-height: 0; display: flex; }
.proptabs { width: 37px; flex: none; padding: 10px 0 0 2px; background: #181818; display: flex; flex-direction: column; align-items: center; gap: 11px; color: #b8b8b8; }
.set { width: 100%; background: #1f1f1f; border-radius: 5px 0 0 5px; overflow: hidden; }
.proptabs button { width: 100%; height: 39px; }
.overflow { color: #666; margin-top: 8px; }
.red { color: #b55d69; }
.azure { color: #6389d3; }
.green { color: #19a67d; }
.orange { color: #e69552; background: #303030; }
.props { flex: 1; min-width: 0; padding: 10px 0 0 11px; display: flex; flex-direction: column; gap: 2px; overflow: hidden; }
.props > * { flex: none; }
.crumb { display: flex; align-items: center; gap: 12px; height: 28px; padding: 0 4px 0 2px; }
.crumb button { margin-left: auto; color: #999; }
.object { margin: 18px 0 10px -1px; }
.props .panel { height: 35px; margin-right: 1px; }
.props .transform { height: 388px; }
.transform .title { height: 34px; }
.fields { display: grid; gap: 8px; padding: 10px 8px 0 0; }
.triple { display: grid; gap: 2px; filter: drop-shadow(0 2px 1px rgba(0, 0, 0, .18)); }
.prop { display: grid; grid-template-columns: 1fr 100px 29px 29px; align-items: center; justify-items: center; height: 26px; }
.prop label { justify-self: end; padding-right: 14px; }
.prop > input { width: 100px; height: 26px; background: #545454; text-align: center; }
.prop:first-child > input { border-top-left-radius: 4px; }
.prop:last-child > input { border-bottom-left-radius: 4px; }
.prop svg { color: #a0a0a0; }
.prop button svg { width: 14px; height: 20px; }
.prop i { width: 6px; height: 6px; border-radius: 50%; background: #e6e6e6; }
.euler { width: 100px; height: 24px; display: flex; align-items: center; padding: 0 3px 0 9px; border-radius: 4px; background: #222; }
.euler select { flex: 1; }
.euler .c, .pick .c { color: #e6e6e6; }
.transform .sub { padding-left: 30px; gap: 5px; margin-top: 14px; height: 30px; }
.props .stub { height: 20px; }
.track { width: 5px; height: 706px; max-height: 100%; margin: 2px 3px 0 1px; border-radius: 3px; background: #404040; flex: none; }

/* Status bar */
.status { display: flex; align-items: center; flex: none; height: 31px; padding: 0 17px 2px 7px; color: #999; }
.m { width: 24px; height: 24px; }
.slim { width: 18px; }
.status span { margin: 0 12px 0 4px; }
.status .version { margin: 0 0 0 auto; }
```
